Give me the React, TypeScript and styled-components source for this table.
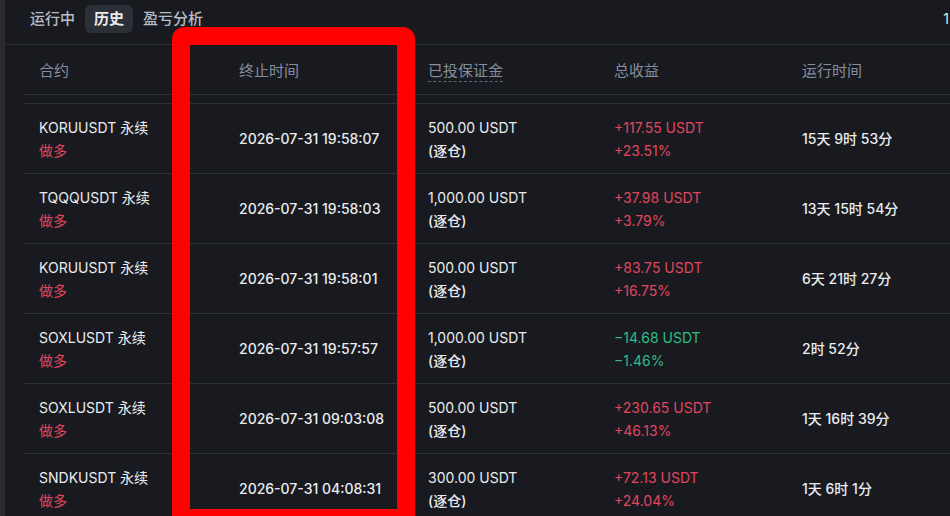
import React from "react";
import styled, { createGlobalStyle } from "styled-components";

const Global = createGlobalStyle`
  html, body { margin: 0; padding: 0; background: #181a20; }
  body { font-family: Inter, "Noto Sans CJK SC", sans-serif; overflow: hidden; }
`;

const Page = styled.div`
  position: relative;
  display: flex;
  width: 950px;
  height: 516px;
  overflow: hidden;
  background: #181a20;
`;

const LeftStrip = styled.div`
  width: 5px;
  flex-shrink: 0;
  background: #2a2b30;
`;

const Panel = styled.div`
  flex: 1;
  display: flex;
  flex-direction: column;
  min-width: 0;
`;

const TabBar = styled.div`
  flex-shrink: 0;
  height: 45px;
  display: flex;
  align-items: flex-start;
  padding: 5px 0 0 16px;
  box-sizing: border-box;
  border-bottom: 1px solid #2e3137;
  gap: 1px;
`;

const Tab = styled.div<{ $active?: boolean }>`
  height: 28px;
  line-height: 28px;
  padding: 0 9px;
  border-radius: 6px;
  font-size: 15px;
  font-weight: ${(p) => (p.$active ? 600 : 500)};
  color: ${(p) => (p.$active ? "#eaecef" : "#b7bdc6")};
  background: ${(p) => (p.$active ? "#2b2f36" : "transparent")};
`;

const RightInfo = styled.div`
  margin-left: auto;
  margin-right: 1px;
  height: 28px;
  line-height: 28px;
  font-size: 14px;
  color: #d8e6e6;
`;

const Table = styled.div`
  flex-shrink: 0;
  margin-left: 19px;
  display: flex;
  flex-direction: column;
`;

const cols = "200px 189px 186px 188px 1fr";

const HeaderRow = styled.div`
  flex-shrink: 0;
  display: grid;
  grid-template-columns: ${cols};
  height: 50px;
  box-sizing: border-box;
  align-items: center;
  border-bottom: 1px solid #2e3137;
  margin-bottom: 8px;
`;

const HeadCell = styled.div<{ $dotted?: boolean }>`
  padding-left: 15px;
  font-size: 15px;
  color: #848e9c;
  span {
    border-bottom: ${(p) => (p.$dotted ? "1px dashed #5e6673" : "none")};
    padding-bottom: 1px;
  }
`;

const Row = styled.div`
  flex-shrink: 0;
  display: grid;
  grid-template-columns: ${cols};
  height: 70px;
  box-sizing: border-box;
  align-items: center;
  border-top: 1px solid #2e3137;
`;

const Cell = styled.div`
  padding-left: 15px;
  display: flex;
  flex-direction: column;
  font-size: 14px;
  line-height: 23px;
  color: #eaecef;
`;

const Name = styled.div`
  font-weight: 400;
`;

const Side = styled.div`
  color: #e0475f;
`;

const Time = styled.div`
  font-weight: 500;
`;

const Strong = styled.div`
  font-weight: 500;
`;

const Pnl = styled.div<{ $neg?: boolean }>`
  color: ${(p) => (p.$neg ? "#2ebd85" : "#e0475f")};
`;

const Highlight = styled.div`
  position: absolute;
  left: 172px;
  top: 27px;
  width: 243px;
  height: 500px;
  box-sizing: border-box;
  border: 18px solid #ff0000;
  border-radius: 12px;
  pointer-events: none;
`;

type Item = {
  name: string;
  time: string;
  margin: string;
  pnl: string;
  pct: string;
  neg?: boolean;
  run: string;
};

const rows: Item[] = [
  { name: "KORUUSDT 永续", time: "2026-07-31 19:58:07", margin: "500.00 USDT", pnl: "+117.55 USDT", pct: "+23.51%", run: "15天 9时 53分" },
  { name: "TQQQUSDT 永续", time: "2026-07-31 19:58:03", margin: "1,000.00 USDT", pnl: "+37.98 USDT", pct: "+3.79%", run: "13天 15时 54分" },
  { name: "KORUUSDT 永续", time: "2026-07-31 19:58:01", margin: "500.00 USDT", pnl: "+83.75 USDT", pct: "+16.75%", run: "6天 21时 27分" },
  { name: "SOXLUSDT 永续", time: "2026-07-31 19:57:57", margin: "1,000.00 USDT", pnl: "−14.68 USDT", pct: "−1.46%", neg: true, run: "2时 52分" },
  { name: "SOXLUSDT 永续", time: "2026-07-31 09:03:08", margin: "500.00 USDT", pnl: "+230.65 USDT", pct: "+46.13%", run: "1天 16时 39分" },
  { name: "SNDKUSDT 永续", time: "2026-07-31 04:08:31", margin: "300.00 USDT", pnl: "+72.13 USDT", pct: "+24.04%", run: "1天 6时 1分" },
];

export default function App() {
  return (
    <>
      <Global />
      <Page>
        <LeftStrip />
        <Panel>
          <TabBar>
            <Tab>运行中</Tab>
            <Tab $active>历史</Tab>
            <Tab>盈亏分析</Tab>
            <RightInfo>1</RightInfo>
          </TabBar>
          <Table>
            <HeaderRow>
              <HeadCell>合约</HeadCell>
              <HeadCell>终止时间</HeadCell>
              <HeadCell $dotted><span>已投保证金</span></HeadCell>
              <HeadCell>总收益</HeadCell>
              <HeadCell>运行时间</HeadCell>
            </HeaderRow>
            {rows.map((r, i) => (
              <Row key={i}>
                <Cell>
                  <Name>{r.name}</Name>
                  <Side>做多</Side>
                </Cell>
                <Cell>
                  <Time>{r.time}</Time>
                </Cell>
                <Cell>
                  <div>{r.margin}</div>
                  <Strong>(逐仓)</Strong>
                </Cell>
                <Cell>
                  <Pnl $neg={r.neg}>{r.pnl}</Pnl>
                  <Pnl $neg={r.neg}>{r.pct}</Pnl>
                </Cell>
                <Cell>
                  <Strong>{r.run}</Strong>
                </Cell>
              </Row>
            ))}
          </Table>
        </Panel>
        <Highlight />
      </Page>
    </>
  );
}
